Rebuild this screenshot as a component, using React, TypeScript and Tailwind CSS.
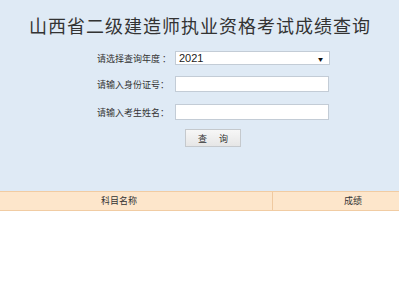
import React from "react";

export default function App() {
  const cjk = { fontFamily: '"Noto Sans CJK SC", "Noto Sans", sans-serif' };
  return (
    <div className="w-[399px] h-[300px] bg-white overflow-hidden" style={cjk}>
      <div className="bg-[#dfeaf5] h-[191px] flex flex-col">
        <div className="pt-[15px] text-center text-[18px] leading-[20px] tracking-[1px] text-[#333] pl-[1px]">
          山西省二级建造师执业资格考试成绩查询
        </div>
        <div className="flex flex-col pl-[97px] mt-[16px]">
          <div className="flex items-center h-[14px]">
            <div className="w-[78px] text-[9px] leading-none text-[#333]">请选择查询年度 ：</div>
            <div className="w-[155px] h-[14px] bg-white border border-[#c3ccd6] flex items-center justify-between px-[3px]">
              <span className="text-[11px] leading-none text-[#222]" style={{ fontFamily: '"Liberation Sans", Arial, sans-serif' }}>2021</span>
              <span className="text-[5px] leading-none text-[#111] pr-[3px]">▼</span>
            </div>
          </div>
          <div className="flex items-center h-[16px] mt-[11px]">
            <div className="w-[78px] text-[9px] leading-none text-[#333]">请输入身份证号：</div>
            <div className="w-[154px] h-[16px] bg-white border border-[#c3ccd6]" />
          </div>
          <div className="flex items-center h-[16px] mt-[12px]">
            <div className="w-[78px] text-[9px] leading-none text-[#333]">请输入考生姓名：</div>
            <div className="w-[154px] h-[16px] bg-white border border-[#c3ccd6]" />
          </div>
        </div>
        <div className="pl-[185px] mt-[9px]">
          <div className="w-[56px] h-[18px] border border-[#c5c9cd] bg-gradient-to-b from-[#f7f7f7] to-[#e6e6e6] flex items-center justify-center gap-[12px] text-[9px] leading-none text-[#333]">
            <span>查</span>
            <span>询</span>
          </div>
        </div>
      </div>
      <div className="flex justify-center">
        <div className="w-[467px] shrink-0 flex h-[20px] bg-[#fde6cb] border-t border-b border-[#f1cca3] text-[9px] text-[#333]">
          <div className="w-[307px] flex items-center justify-center border-r border-[#efc9a0]">科目名称</div>
          <div className="flex-1 flex items-center justify-center">成绩</div>
        </div>
      </div>
    </div>
  );
}
